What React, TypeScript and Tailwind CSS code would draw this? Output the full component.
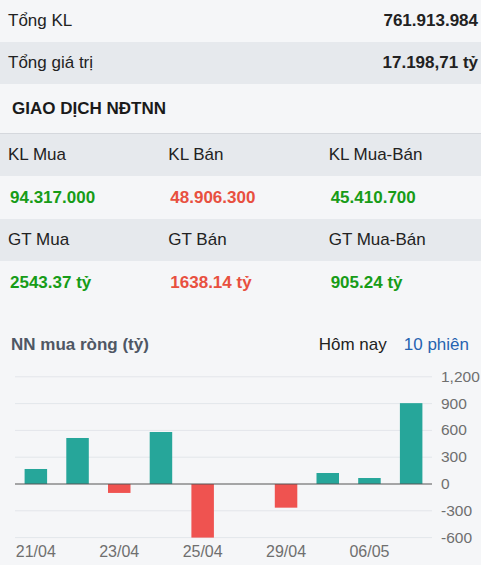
const stats = [
  { label: "Tổng KL", value: "761.913.984", bg: "bg-[#f5f6f8]" },
  { label: "Tổng giá trị", value: "17.198,71 tỷ", bg: "bg-[#e6e9ed]" },
];

const foreign = [
  {
    heads: ["KL Mua", "KL Bán", "KL Mua-Bán"],
    values: ["94.317.000", "48.906.300", "45.410.700"],
  },
  {
    heads: ["GT Mua", "GT Bán", "GT Mua-Bán"],
    values: ["2543.37 tỷ", "1638.14 tỷ", "905.24 tỷ"],
  },
];

const valueColors = ["text-[#179c17]", "text-[#e8503f]", "text-[#179c17]"];

const bars = [168, 515, -100, 582, -600, 0, -265, 123, 67, 905];
const ticks = [1200, 900, 600, 300, 0, -300, -600];
const dates = [
  { i: 0, label: "21/04" },
  { i: 2, label: "23/04" },
  { i: 4, label: "25/04" },
  { i: 6, label: "29/04" },
  { i: 8, label: "06/05" },
];

const zeroY = 120;
const k = 26.8 / 300;
const left = 15;
const right = 432;
const slot = (right - left) / 10;
const barW = 22.5;

function Chart() {
  return (
    <svg width="481" height="200" className="block" style={{ fontFamily: '"Liberation Sans", Arial, sans-serif' }}>
      {ticks.map((t) => {
        const y = zeroY - t * k;
        return (
          <g key={t}>
            {t !== 0 && <line x1={left} x2={right} y1={y} y2={y} stroke="#e3e6ea" strokeWidth="1" />}
            <text x="441" y={y + 5} fontSize="15.5" fill="#6f6f6f">
              {t.toLocaleString("en-US")}
            </text>
          </g>
        );
      })}
      {bars.map((v, i) => {
        if (v === 0) return null;
        const h = Math.abs(v) * k;
        const x = left + i * slot + (slot - barW) / 2;
        return (
          <rect
            key={i}
            x={x}
            y={v > 0 ? zeroY - h : zeroY}
            width={barW}
            height={h}
            fill={v > 0 ? "#26a69a" : "#ef5350"}
          />
        );
      })}
      <line x1={left} x2={right} y1={zeroY} y2={zeroY} stroke="#555" strokeWidth="1" />
      {dates.map((d) => (
        <text
          key={d.label}
          x={left + d.i * slot + slot / 2}
          y="193"
          fontSize="16"
          textAnchor="middle"
          fill="#6f6f6f"
        >
          {d.label}
        </text>
      ))}
    </svg>
  );
}

export default function App() {
  return (
    <div
      className="w-[481px] h-[565px] overflow-hidden bg-[#f5f6f8] text-[17px] text-[#222]"
      style={{ fontFamily: '"Liberation Sans", Arial, sans-serif' }}
    >
      {stats.map((s) => (
        <div key={s.label} className={`flex h-[42px] items-center justify-between pl-2 pr-[3px] ${s.bg}`}>
          <span>{s.label}</span>
          <span className="font-bold">{s.value}</span>
        </div>
      ))}

      <div className="flex h-[49px] items-center pl-3 font-bold text-[#1a1a1a]">GIAO DỊCH NĐTNN</div>

      <div className="border-t border-[#d5d8dd]">
        {foreign.map((group) => (
          <div key={group.heads[0]}>
            <div className="grid h-[42px] grid-cols-3 items-center bg-[#e6e9ed]">
              {group.heads.map((h) => (
                <span key={h} className="pl-2">
                  {h}
                </span>
              ))}
            </div>
            <div className="grid h-[43px] grid-cols-3 items-center">
              {group.values.map((v, i) => (
                <span key={v} className={`pl-2.5 font-bold ${valueColors[i]}`}>
                  {v}
                </span>
              ))}
            </div>
          </div>
        ))}
      </div>

      <div className="flex h-[60px] items-center justify-between pl-[11px] pr-3 pt-[22px]">
        <span className="font-bold text-[#4f5764]">NN mua ròng (tỷ)</span>
        <div className="flex items-center gap-[17px]">
          <span className="text-[#222]">Hôm nay</span>
          <span className="text-[#2563b0]">10 phiên</span>
        </div>
      </div>

      <Chart />
    </div>
  );
}
